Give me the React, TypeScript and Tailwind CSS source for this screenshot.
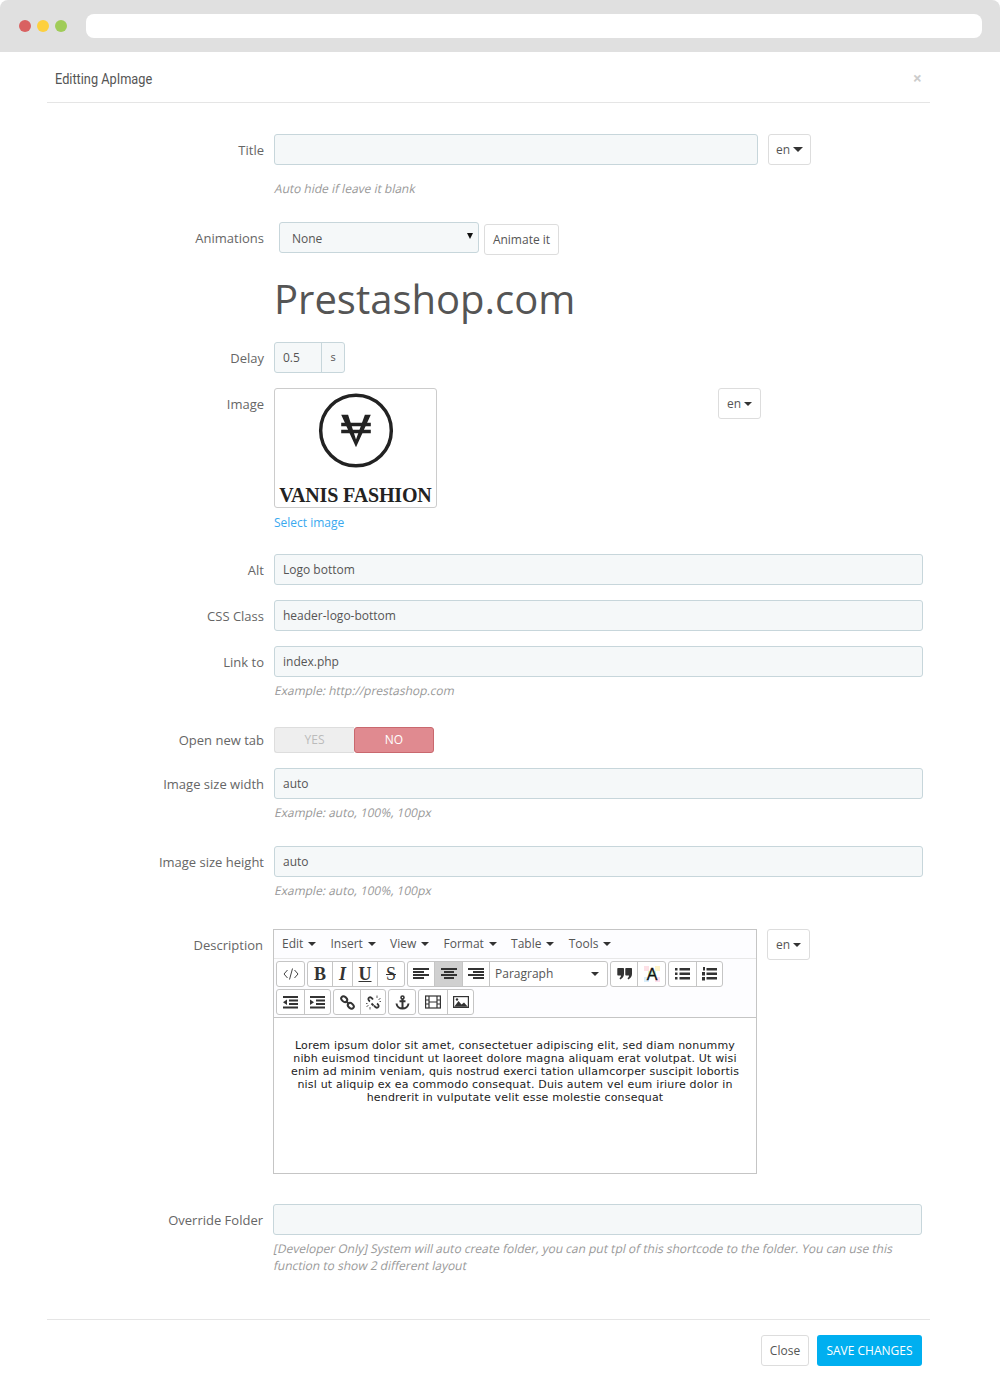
import type { ReactNode } from 'react'

const inputClass =
  'h-[31px] rounded-[3px] border border-[#c7d6db] bg-[#f5f8f9] px-2 text-[12px] text-[#555] outline-none'

function Caret({ wide = false }: { wide?: boolean }) {
  return (
    <span
      className={`inline-block h-0 w-0 border-x-transparent border-t-[#333] ${wide ? 'border-x-[5px] border-t-[5px]' : 'border-x-[4px] border-t-[4px]'}`}
    />
  )
}

function Row({ label, className = '', labelClass = 'w-[217px] pt-[7px]', children }: { label: string; className?: string; labelClass?: string; children: ReactNode }) {
  return (
    <div className={`flex items-start gap-[10px] ${className}`}>
      <label className={`shrink-0 text-right text-[13px] leading-[18px] text-[#666] ${labelClass}`}>{label}</label>
      {children}
    </div>
  )
}

function Help({ lines, className = '' }: { lines: string[]; className?: string }) {
  return (
    <div className={className}>
      {lines.map((line) => (
        <p key={line} className="origin-left -skew-x-[12deg] whitespace-nowrap text-[12px] leading-[17px] text-[#999]">
          {line}
        </p>
      ))}
    </div>
  )
}

function LangButton({ wide = false }: { wide?: boolean }) {
  return (
    <button className="flex h-[31px] w-[43px] items-center justify-center gap-[3px] rounded-[3px] border border-[#ddd] bg-white text-[12px] text-[#555]">
      en <Caret wide={wide} />
    </button>
  )
}

function Bars({ rows }: { rows: [number, number][] }) {
  return (
    <svg width="16" height="14" viewBox="0 0 16 14" fill="#333">
      {rows.map(([x, w], i) => (
        <rect key={i} x={x} y={1 + i * 3} width={w} height="2" />
      ))}
    </svg>
  )
}

const icons: Record<string, ReactNode> = {
  code: (
    <svg width="16" height="14" viewBox="0 0 16 14" fill="none" stroke="#444" strokeWidth="1">
      <path d="M4.500 3 1 7l3.500 4M11.500 3 15 7l-3.500 4M9.500 1.500l-3 11" />
    </svg>
  ),
  left: <Bars rows={[[0, 16], [0, 11], [0, 16], [0, 11]]} />,
  center: <Bars rows={[[0, 16], [3, 10], [0, 16], [3, 10]]} />,
  right: <Bars rows={[[0, 16], [5, 11], [0, 16], [5, 11]]} />,
  quote: (
    <svg width="15" height="14" viewBox="0 0 15 14" fill="#333">
      <path d="M1 1h5.300Q7 1 7 1.700V7c0 2.500-1.500 4.500-3.800 5.500l-.7-1.300C3.600 10.500 4 9.500 4 8.500H1Q.3 8.500.3 7.800V1.700Q.3 1 1 1zM9 1h5.300Q15 1 15 1.700V7c0 2.500-1.500 4.500-3.800 5.500l-.7-1.300c1.100-.7 1.500-1.700 1.500-2.700H9q-.7 0-.7-.7V1.700Q8.300 1 9 1z" />
    </svg>
  ),
  color: (
    <svg width="16" height="16" viewBox="0 0 16 16">
      <rect x="0" y="0" width="5" height="5" fill="#fde0e6" />
      <rect x="11" y="0" width="5" height="5" fill="#fff4c8" />
      <rect x="0" y="11" width="5" height="5" fill="#d8eefc" />
      <rect x="11" y="11" width="5" height="5" fill="#fde0ee" />
      <rect x="4" y="5" width="8" height="6" fill="#d8f5dc" />
      <text x="8" y="14" textAnchor="middle" fontFamily="'Liberation Sans', sans-serif" fontSize="16" fill="#111" stroke="#111" strokeWidth="0.300">
        A
      </text>
    </svg>
  ),
  bullets: (
    <svg width="15" height="12" viewBox="0 0 15 12" fill="#333">
      <rect x="0" y="0" width="2.500" height="2.500" />
      <rect x="0" y="4.500" width="2.500" height="2.500" />
      <rect x="0" y="9" width="2.500" height="2.500" />
      <rect x="4.500" y="0" width="10.500" height="2.500" />
      <rect x="4.500" y="4.500" width="10.500" height="2.500" />
      <rect x="4.500" y="9" width="10.500" height="2.500" />
    </svg>
  ),
  numbers: (
    <svg width="15" height="14" viewBox="0 0 15 14" fill="#333">
      <rect x="1" y="0" width="2" height="3.500" />
      <rect x="0" y="5" width="3" height="3.500" />
      <rect x="0" y="10" width="3" height="3.500" />
      <rect x="4.500" y="1" width="10.500" height="2.500" />
      <rect x="4.500" y="5.500" width="10.500" height="2.500" />
      <rect x="4.500" y="10" width="10.500" height="2.500" />
    </svg>
  ),
  outdent: (
    <svg width="15" height="13" viewBox="0 0 15 13" fill="#333">
      <rect x="0" y="0" width="15" height="2" />
      <rect x="6" y="3.500" width="9" height="2" />
      <rect x="6" y="7" width="9" height="2" />
      <rect x="0" y="10.500" width="15" height="2" />
      <path d="M4 3.500v5.500L0 6.250z" />
    </svg>
  ),
  indent: (
    <svg width="15" height="13" viewBox="0 0 15 13" fill="#333">
      <rect x="0" y="0" width="15" height="2" />
      <rect x="6" y="3.500" width="9" height="2" />
      <rect x="6" y="7" width="9" height="2" />
      <rect x="0" y="10.500" width="15" height="2" />
      <path d="M0 3.500v5.500l4-2.750z" />
    </svg>
  ),
  link: (
    <svg width="15" height="15" viewBox="0 0 15 15" fill="none" stroke="#333" strokeWidth="2">
      <ellipse cx="4.200" cy="4.200" rx="3.300" ry="2.400" transform="rotate(40 4.200 4.200)" />
      <ellipse cx="10.800" cy="10.800" rx="3.300" ry="2.400" transform="rotate(40 10.800 10.800)" />
      <path d="m5.800 5.800 3.400 3.400" />
    </svg>
  ),
  unlink: (
    <svg width="15" height="15" viewBox="0 0 15 15" fill="none" stroke="#333">
      <path d="M7 4.500C6 3 4.500 1.800 3.200 2.600 1.600 3.600 2.400 5.400 4 6.500M8 10.500c1 1.500 2.500 2.700 3.800 1.900 1.600-1 .8-2.800-.8-3.900" strokeWidth="1.800" />
      <path d="M5.500 8.500 7.500 10.500" strokeWidth="1.800" />
      <path d="M11 .5v2.500M14.500 3.500l-2 1M13.500 6.500h1.500M4 14.500V12M.5 11.500l2-1M1.500 8.500H0" strokeWidth="0.800" />
    </svg>
  ),
  anchor: (
    <svg width="15" height="15" viewBox="0 0 15 15" fill="none" stroke="#333" strokeWidth="2">
      <circle cx="7.500" cy="2.500" r="1.500" strokeWidth="1.600" />
      <path d="M7.500 4v10M4.500 6.200h6M1.500 8.500c.3 3 3 5 6 5s5.700-2 6-5" />
    </svg>
  ),
  media: (
    <svg width="16" height="14" viewBox="0 0 16 14" fill="none" stroke="#333" strokeWidth="1.200">
      <rect x="0.600" y="1" width="14.800" height="12" />
      <path d="M4 1v12M12 1v12M0.600 5h3.400M0.600 9h3.400M12 5h3.400M12 9h3.400M4 7h8" />
    </svg>
  ),
  image: (
    <svg width="16" height="14" viewBox="0 0 16 14">
      <rect x="0" y="1" width="16" height="12" fill="#333" />
      <rect x="1.200" y="2.200" width="13.600" height="9.600" fill="#fff" />
      <path d="M1.200 11.800 5.500 6l3 3.500L11 7.500l3.800 4.300z" fill="#333" />
      <circle cx="4" cy="4.500" r="1.200" fill="#333" />
    </svg>
  ),
}

function ToolGroup({ cells }: { cells: { w: number; content: ReactNode }[] }) {
  return (
    <div className="flex h-[26px] rounded-[3px] border border-[#c5c5c5] bg-white">
      {cells.map((c, i) => (
        <span key={i} style={{ width: c.w }} className={`flex items-center justify-center ${i > 0 ? 'border-l border-[#c5c5c5]' : ''}`}>
          {c.content}
        </span>
      ))}
    </div>
  )
}

function Letter({ className, children }: { className: string; children: string }) {
  return <span className={`font-['Liberation_Serif',serif] text-[18px] font-bold leading-none text-[#333] ${className}`}>{children}</span>
}

function Editor() {
  return (
    <div className="w-[484px] border border-[#c5c5c5] bg-white">
      <div className="flex h-[29px] items-center gap-[14.2px] border-b border-[#e8e8e8] bg-[#fdfdff] pl-2 text-[12px] text-[#555]">
        {['Edit', 'Insert', 'View', 'Format', 'Table', 'Tools'].map((m) => (
          <span key={m} className="flex items-center gap-[5px]">
            {m} <Caret />
          </span>
        ))}
      </div>
      <div className="flex h-[59px] flex-col gap-[2px] border-b border-[#c5c5c5] bg-[#fdfdff] pl-[2px] pt-[2px]">
        <div className="flex gap-[2px]">
          <ToolGroup cells={[{ w: 27, content: icons.code }]} />
          <ToolGroup
            cells={[
              { w: 24, content: <Letter className="">B</Letter> },
              { w: 20, content: <Letter className="italic">I</Letter> },
              { w: 25, content: <Letter className="underline">U</Letter> },
              { w: 27, content: <Letter className="font-normal line-through">S</Letter> },
            ]}
          />
          <div className="flex h-[26px] rounded-[3px] border border-[#c5c5c5] bg-white">
            <span className="flex w-[26px] items-center justify-center">{icons.left}</span>
            <span className="flex w-[28px] items-center justify-center border-l border-[#c5c5c5] bg-[#d0d0d0]">{icons.center}</span>
            <span className="flex w-[27px] items-center justify-center border-l border-[#c5c5c5]">{icons.right}</span>
            <span className="flex w-[118px] items-center justify-between border-l border-[#c5c5c5] pl-[5px] pr-[8px] text-[12px] text-[#555]">
              Paragraph <Caret />
            </span>
          </div>
          <ToolGroup cells={[{ w: 26, content: icons.quote }, { w: 28, content: icons.color }]} />
          <ToolGroup cells={[{ w: 27, content: icons.bullets }, { w: 26, content: icons.numbers }]} />
        </div>
        <div className="flex gap-[2px]">
          <ToolGroup cells={[{ w: 27, content: icons.outdent }, { w: 26, content: icons.indent }]} />
          <ToolGroup cells={[{ w: 26, content: icons.link }, { w: 25, content: icons.unlink }]} />
          <ToolGroup cells={[{ w: 26, content: icons.anchor }]} />
          <ToolGroup cells={[{ w: 28, content: icons.media }, { w: 26, content: icons.image }]} />
        </div>
      </div>
      <div className="h-[155px] px-[12px] pt-[21px] text-center font-['DejaVu_Sans',sans-serif] text-[11px] leading-[13px] tracking-[0.18px] text-[#222]">
        Lorem ipsum dolor sit amet, consectetuer adipiscing elit, sed diam nonummy nibh euismod tincidunt ut laoreet dolore magna aliquam erat volutpat. Ut wisi enim ad minim veniam, quis nostrud exerci tation ullamcorper suscipit lobortis nisl ut aliquip ex ea commodo consequat. Duis autem vel eum iriure dolor in hendrerit in vulputate velit esse molestie consequat
      </div>
    </div>
  )
}

function Logo() {
  return (
    <div className="flex h-[120px] w-[163px] flex-col items-center overflow-hidden rounded-[3px] border border-[#ccc] bg-white">
      <svg width="76" height="76" viewBox="0 0 76 76" className="ml-[1px] mt-[4px]" fill="none" stroke="#222">
        <circle cx="38" cy="38" r="35.800" strokeWidth="3.500" />
        <path d="M23 22h7l8 25 9-25h6L38 55z" fill="#222" stroke="none" />
        <path d="M23 32h30M23 39h30" strokeWidth="3.500" />
      </svg>
      <span className="mt-[15px] whitespace-nowrap font-['Liberation_Serif',serif] text-[20px] font-bold leading-[24px] tracking-[-0.15px] text-[#222]">
        VANIS FASHION
      </span>
    </div>
  )
}

export default function App() {
  return (
    <div className="min-h-[1384px] bg-white font-['Open_Sans',sans-serif]">
      <div className="flex h-[52px] items-center gap-[6px] rounded-t-[8px] bg-[#e0e0e0] pl-[19px] pr-[18px]">
        <span className="h-[12px] w-[12px] rounded-full bg-[#d96161]" />
        <span className="h-[12px] w-[12px] rounded-full bg-[#fdd03f]" />
        <span className="h-[12px] w-[12px] rounded-full bg-[#a0cc58]" />
        <div className="ml-[13px] h-[24px] flex-1 rounded-[8px] bg-white" />
      </div>

      <div className="mx-[47px] w-[883px]">
        <div className="flex h-[51px] items-center justify-between border-b border-[#e5e5e5] px-2 pt-[4px]">
          <h4 className="origin-left scale-x-[0.85] whitespace-nowrap font-['Roboto',sans-serif] text-[15px] font-normal text-[#555]">Editting ApImage</h4>
          <span className="-mt-[3px] text-[16px] font-bold leading-none text-[#ccc]">×</span>
        </div>

        <Row label="Title" className="mt-[31px]">
          <input className={`${inputClass} w-[484px]`} />
          <LangButton wide />
        </Row>
        <Help className="ml-[228px] mt-[15px]" lines={['Auto hide if leave it blank']} />

        <Row label="Animations" className="mt-[25px]">
          <div className="relative ml-[5px]">
            <select className={`${inputClass} w-[200px] appearance-none pl-3 pt-[2px]`}>
              <option>None</option>
            </select>
            <span className="absolute right-[6px] top-[11px] h-0 w-0 border-x-[3px] border-t-[6px] border-x-transparent border-t-[#111]" />
          </div>
          <button className="ml-[-5px] mt-[2px] h-[31px] w-[75px] rounded-[3px] border border-[#ddd] bg-white text-[12px] text-[#555]">Animate it</button>
        </Row>

        <h1 className="ml-[227px] mt-[17px] text-[40px] leading-[54px] text-[#555]">Prestashop.com</h1>

        <Row label="Delay" className="mt-[16px]">
          <div className="flex h-[31px] w-[71px] rounded-[3px] border border-[#c7d6db] bg-[#f5f8f9] text-[12px] text-[#555]">
            <span className="flex w-[47px] items-center border-r border-[#c7d6db] pl-2">0.5</span>
            <span className="flex flex-1 items-center justify-center text-[11px]">s</span>
          </div>
        </Row>

        <Row label="Image" className="mt-[15px]">
          <div className="w-[434px]">
            <Logo />
            <a className="mt-[6px] block text-[12px] leading-[18px] text-[#3aa9ef]">Select image</a>
          </div>
          <LangButton />
        </Row>

        <Row label="Alt" className="mt-[22px]">
          <input className={`${inputClass} w-[649px]`} defaultValue="Logo bottom" />
        </Row>
        <Row label="CSS Class" className="mt-[15px]">
          <input className={`${inputClass} w-[649px]`} defaultValue="header-logo-bottom" />
        </Row>
        <Row label="Link to" className="mt-[15px]">
          <input className={`${inputClass} w-[649px]`} defaultValue="index.php" />
        </Row>
        <Help className="ml-[228px] mt-[5px]" lines={['Example: http://prestashop.com']} />

        <Row label="Open new tab" labelClass="w-[217px] pt-[4px]" className="mt-[28px]">
          <div className="flex h-[26px] w-[160px] text-[12px]">
            <span className="flex w-[80px] items-center justify-center rounded-l-[3px] border border-r-0 border-[#ddd] bg-[#eee] text-[#bbb]">YES</span>
            <span className="flex w-[80px] items-center justify-center rounded-[3px] border border-[#c9686e] bg-[#e08a90] text-white">NO</span>
          </div>
        </Row>
        <Row label="Image size width" className="mt-[15px]">
          <input className={`${inputClass} w-[649px]`} defaultValue="auto" />
        </Row>
        <Help className="ml-[228px] mt-[5px]" lines={['Example: auto, 100%, 100px']} />
        <Row label="Image size height" className="mt-[25px]">
          <input className={`${inputClass} w-[649px]`} defaultValue="auto" />
        </Row>
        <Help className="ml-[228px] mt-[5px]" lines={['Example: auto, 100%, 100px']} />

        <Row label="Description" labelClass="w-[216px] pt-[7px]" className="mt-[30px]">
          <Editor />
          <LangButton />
        </Row>

        <Row label="Override Folder" labelClass="w-[216px] pt-[7px]" className="mt-[30px]">
          <input className={`${inputClass} w-[649px]`} />
        </Row>
        <Help
          className="ml-[227px] mt-[5px]"
          lines={[
            '[Developer Only] System will auto create folder, you can put tpl of this shortcode to the folder. You can use this',
            'function to show 2 different layout',
          ]}
        />

        <div className="mt-[45px] flex justify-end gap-2 border-t border-[#e5e5e5] pr-2 pt-[15px]">
          <button className="h-[31px] w-[48px] rounded-[3px] border border-[#ddd] bg-white text-[12px] text-[#555]">Close</button>
          <button className="h-[31px] w-[105px] rounded-[3px] bg-[#00aff0] text-[12px] text-white">SAVE CHANGES</button>
        </div>
      </div>
    </div>
  )
}
